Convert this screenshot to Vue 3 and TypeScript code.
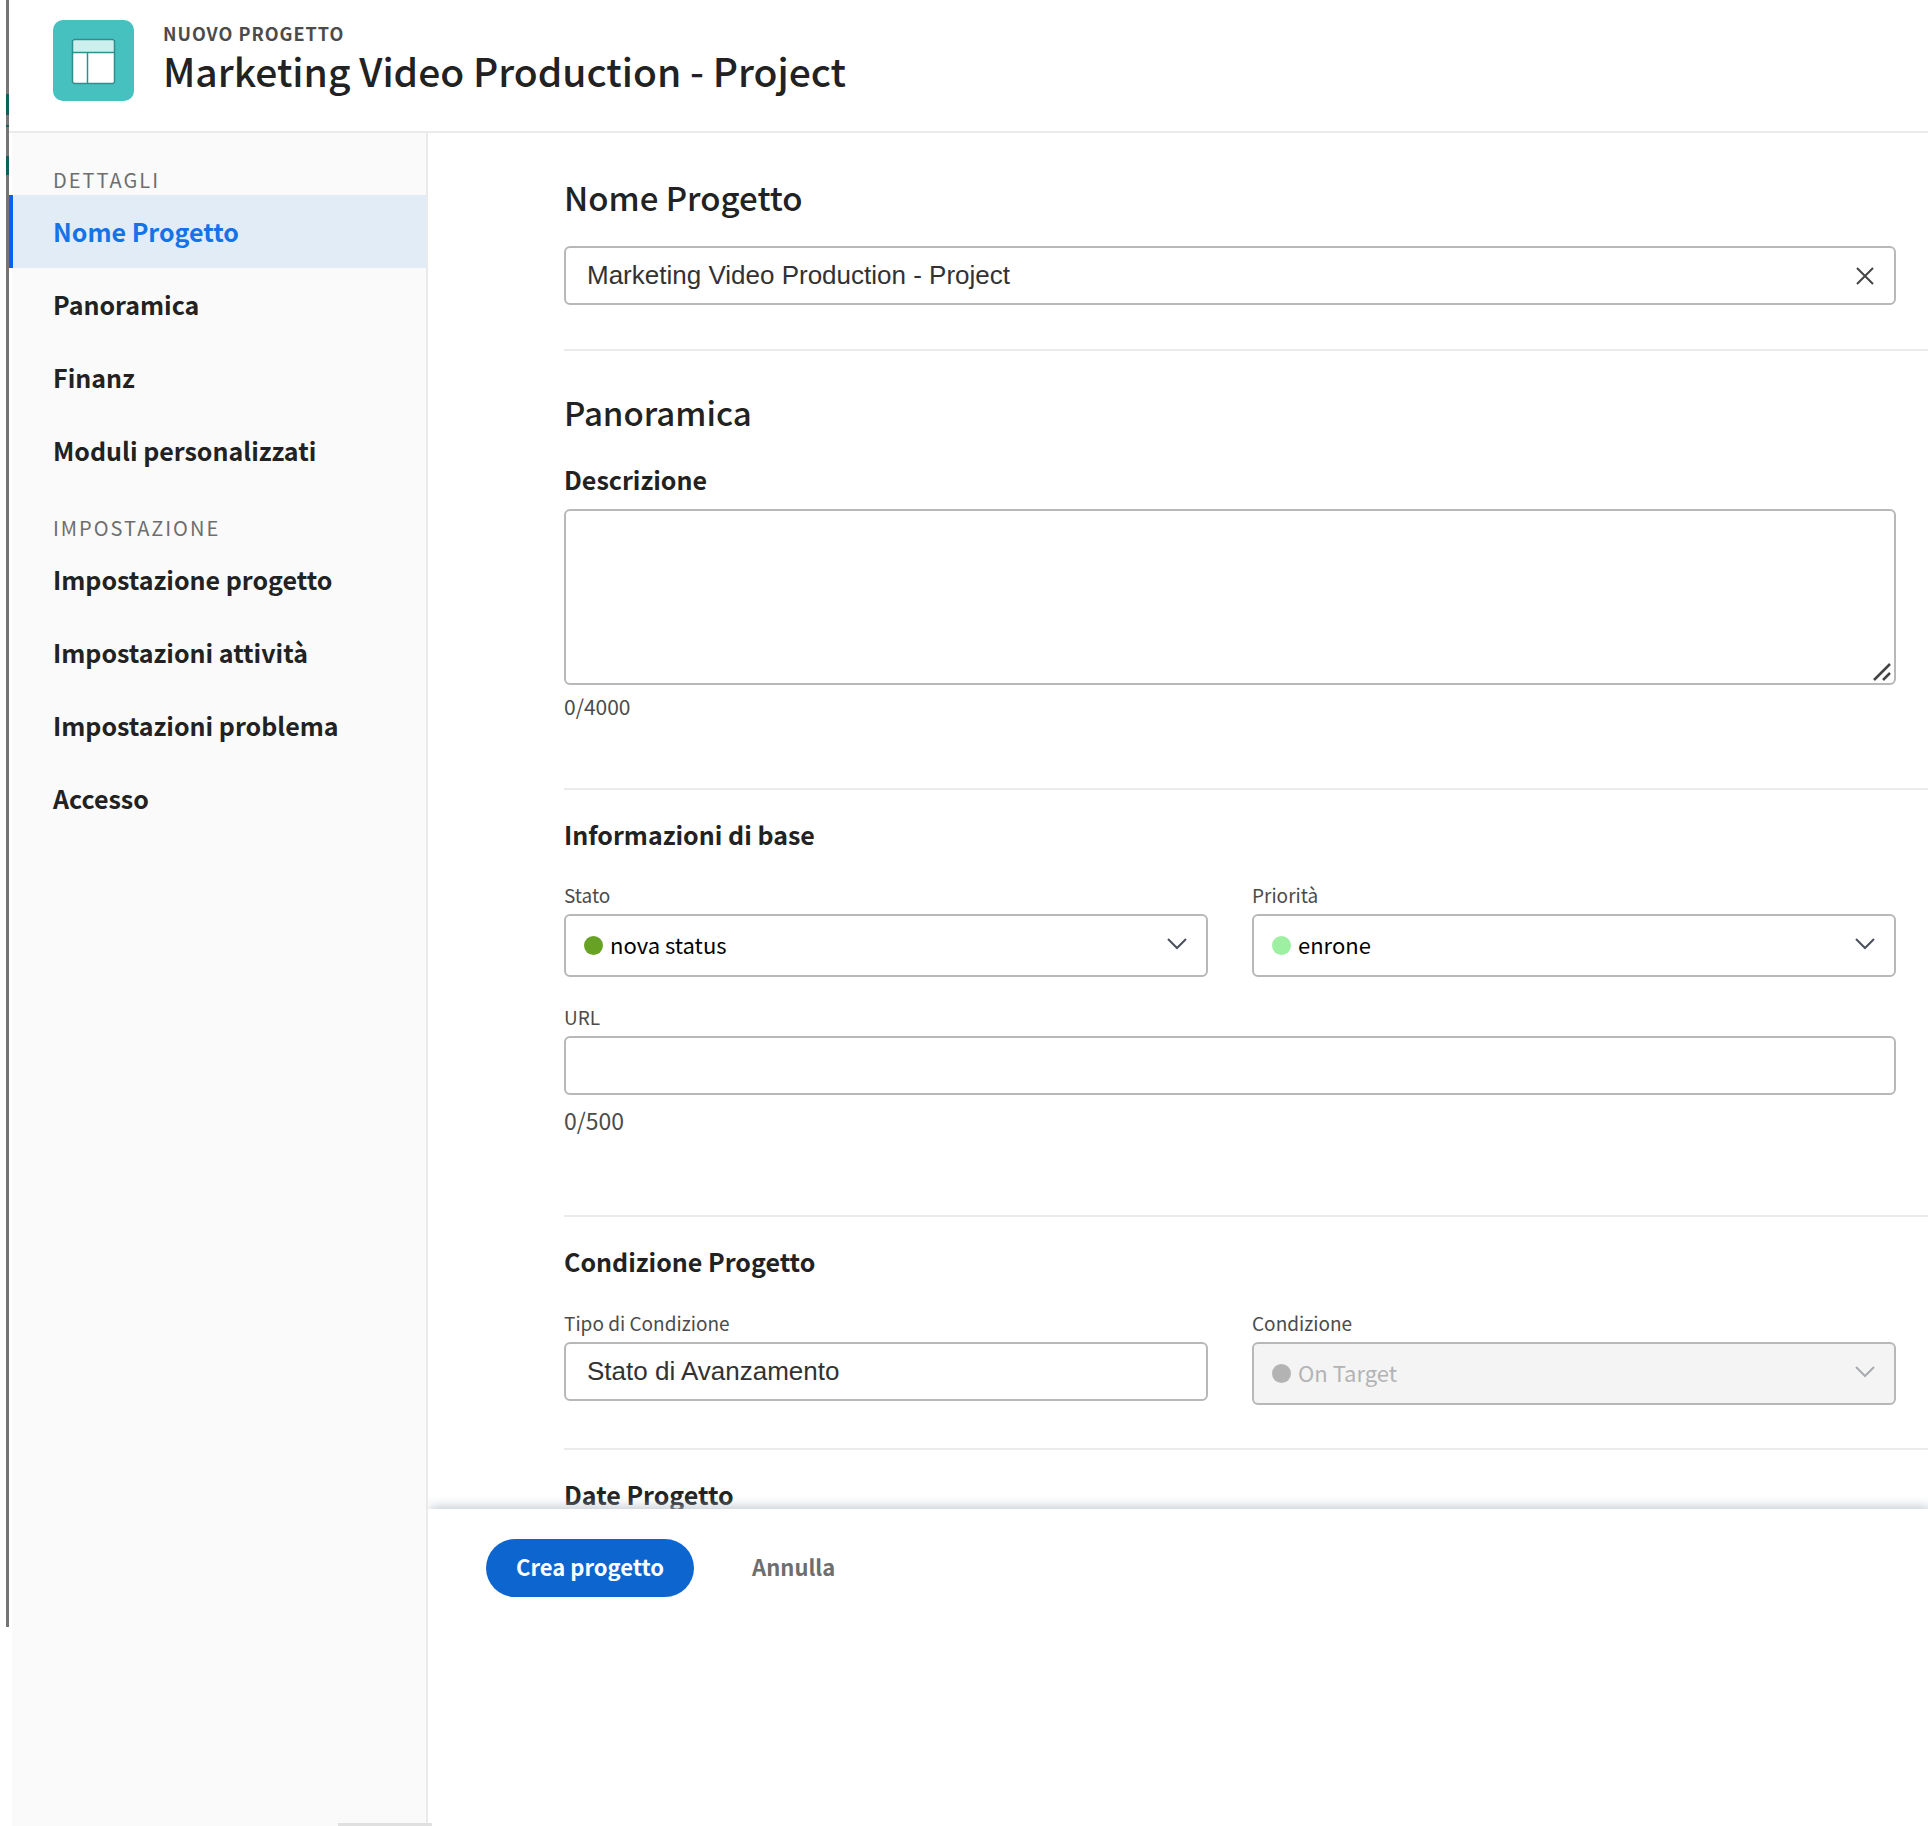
<script setup lang="ts">
import { ref } from 'vue'

interface NavItem {
  id: string
  label: string
}

interface NavGroup {
  title: string
  items: NavItem[]
}

const groups: NavGroup[] = [
  {
    title: 'DETTAGLI',
    items: [
      { id: 'nome', label: 'Nome Progetto' },
      { id: 'panoramica', label: 'Panoramica' },
      { id: 'finanz', label: 'Finanz' },
      { id: 'moduli', label: 'Moduli personalizzati' },
    ],
  },
  {
    title: 'IMPOSTAZIONE',
    items: [
      { id: 'progetto', label: 'Impostazione progetto' },
      { id: 'attivita', label: 'Impostazioni attività' },
      { id: 'problema', label: 'Impostazioni problema' },
      { id: 'accesso', label: 'Accesso' },
    ],
  },
]

const active = ref('nome')
const projectName = ref('Marketing Video Production - Project')
const description = ref('')
const url = ref('')
const conditionType = ref('Stato di Avanzamento')
</script>

<template>
  <div class="dialog">
    <div class="rail" aria-hidden="true"></div>
    <header class="header">
      <svg class="logo" viewBox="0 0 81 81" aria-hidden="true">
        <rect width="81" height="81" rx="10" fill="#47c1bf" />
        <rect x="19" y="19" width="43" height="45" rx="2" fill="#fff" />
        <path d="M19 32V21a2 2 0 0 1 2-2h39a2 2 0 0 1 2 2v11z" fill="#cdf0ee" />
        <path d="M19.500 32.500h42M34.500 32.500v31" fill="none" stroke="#2f8f8f" stroke-width="1.500" />
        <rect x="19.500" y="19.500" width="42" height="44" rx="2" fill="none" stroke="#2f8f8f" stroke-width="1.500" />
      </svg>
      <div class="titles">
        <p class="eyebrow">NUOVO PROGETTO</p>
        <h1 class="title">Marketing Video Production - Project</h1>
      </div>
    </header>

    <div class="body">
      <nav class="sidebar">
        <div v-for="group in groups" :key="group.title" class="group">
          <p class="group-title">{{ group.title }}</p>
          <a
            v-for="item in group.items"
            :key="item.id"
            class="nav-item"
            :class="{ active: active === item.id }"
            :href="'#' + item.id"
            @click="active = item.id"
          >{{ item.label }}</a>
        </div>
        <div class="sidebar-edge" aria-hidden="true"></div>
      </nav>

      <main class="main">
        <form id="project-form" class="form" @submit.prevent>
          <section class="section first">
            <h2><label for="name">Nome Progetto</label></h2>
            <div class="control">
              <input id="name" v-model="projectName" class="input name" type="text" />
              <button class="clear" type="button" aria-label="Cancella" @click="projectName = ''">
                <svg viewBox="0 0 18 18" width="18" height="18">
                  <path d="M1 1l16 16M17 1L1 17" stroke="#444" stroke-width="2" />
                </svg>
              </button>
            </div>
          </section>

          <section class="section overview">
            <h2>Panoramica</h2>
            <h3><label for="description">Descrizione</label></h3>
            <div class="control">
              <textarea id="description" v-model="description" class="input area" maxlength="4000"></textarea>
              <svg class="grip" viewBox="0 0 20 20" aria-hidden="true">
                <path d="M2 18L18 2M11 18l7-7" stroke="#444" stroke-width="2.500" />
              </svg>
            </div>
            <p class="count">{{ description.length }}/4000</p>
          </section>

          <section class="section info">
            <h3>Informazioni di base</h3>
            <div class="row">
              <div class="field">
                <label for="status">Stato</label>
                <div class="control">
                  <select id="status" class="input select"><option>nova status</option></select>
                  <span class="dot green"></span>
                  <svg class="chevron" viewBox="0 0 20 12" aria-hidden="true"><path d="M1 1l9 9 9-9" /></svg>
                </div>
              </div>
              <div class="field">
                <label for="priority">Priorità</label>
                <div class="control">
                  <select id="priority" class="input select"><option>enrone</option></select>
                  <span class="dot mint"></span>
                  <svg class="chevron" viewBox="0 0 20 12" aria-hidden="true"><path d="M1 1l9 9 9-9" /></svg>
                </div>
              </div>
            </div>
            <div class="field url">
              <label for="url">URL</label>
              <input id="url" v-model="url" class="input" type="text" maxlength="500" />
            </div>
            <p class="count large">{{ url.length }}/500</p>
          </section>

          <section class="section condition">
            <h3>Condizione Progetto</h3>
            <div class="row">
              <div class="field">
                <label for="condition-type">Tipo di Condizione</label>
                <input id="condition-type" v-model="conditionType" class="input" type="text" />
              </div>
              <div class="field">
                <label for="condition">Condizione</label>
                <div class="control">
                  <select id="condition" class="input select" disabled><option>On Target</option></select>
                  <span class="dot grey"></span>
                  <svg class="chevron muted" viewBox="0 0 20 12" aria-hidden="true"><path d="M1 1l9 9 9-9" /></svg>
                </div>
              </div>
            </div>
          </section>

          <section class="section dates">
            <h3>Date Progetto</h3>
          </section>
        </form>

        <footer class="footer">
          <button class="primary" type="submit" form="project-form">Crea progetto</button>
          <button class="cancel" type="button">Annulla</button>
        </footer>
      </main>
    </div>
  </div>
</template>

<style>
body {
  margin: 0;
}
</style>

<style scoped>
.dialog,
.dialog * {
  box-sizing: border-box;
}
.dialog {
  position: relative;
  display: flex;
  flex-direction: column;
  height: 100vh;
  padding-left: 9px;
  overflow: hidden;
  background: #fff;
  color: #222;
  font-family: 'Noto Sans CJK SC', 'Noto Sans', sans-serif;
}
p,
h1,
h2,
h3 {
  margin: 0;
}

/* Sliver of the page behind the dialog */
.rail {
  position: absolute;
  top: 0;
  left: 6px;
  width: 3px;
  height: calc(100vh - 199px);
  background: linear-gradient(
    #757575 94px, #0f5f5a 94px 115px, #757575 115px 125px, #0f5f5a 125px 127px,
    #757575 127px 156px, #0f5f5a 156px 175px, #757575 175px
  );
}

.header {
  display: flex;
  align-items: flex-start;
  gap: 29px;
  padding: 20px 44px 30px;
  border-bottom: 2px solid #ebebeb;
}
.logo {
  width: 81px;
  height: 81px;
  flex: none;
}
.eyebrow {
  color: #4b4b4b;
  font-size: 18px;
  font-weight: 700;
  line-height: 26px;
  letter-spacing: 1px;
}
.title {
  font-size: 39px;
  font-weight: 500;
  line-height: 48px;
}

.body {
  display: flex;
  flex: 1;
  min-height: 0;
}
.sidebar {
  position: relative;
  flex: none;
  width: 419px;
  padding-top: 34px;
  border-right: 2px solid #eaeaea;
  background: linear-gradient(90deg, #fff 3px, #fafafa 3px);
}
.sidebar-edge {
  position: absolute;
  z-index: 1;
  right: -6px;
  bottom: 0;
  width: 94px;
  height: 3px;
  background: #e0e0e0;
}
.group + .group {
  margin-top: 28px;
}
.group-title {
  margin-bottom: 3px;
  padding-top: 1px;
  padding-left: 44px;
  color: #6e6e6e;
  font-size: 20px;
  line-height: 24px;
  letter-spacing: 2px;
}
.nav-item {
  display: block;
  padding-left: 40px;
  border-left: 4px solid transparent;
  color: #222;
  font-size: 25px;
  font-weight: 700;
  line-height: 73px;
  text-decoration: none;
}
.nav-item.active {
  border-left-color: #0265f0;
  background: #e2ecf7;
  color: #1473e6;
}

.main {
  display: flex;
  flex: 1;
  flex-direction: column;
  min-width: 0;
}
.form {
  flex: 1;
  min-height: 0;
  padding-left: 136px;
  overflow-y: auto;
  scrollbar-width: none;
}
.section {
  padding-top: 28px;
  padding-right: 32px;
  padding-bottom: 44px;
  border-bottom: 2px solid #ebebeb;
}
.first {
  padding-top: 44px;
}
.overview {
  padding-top: 41px;
  padding-bottom: 70px;
}
.info {
  padding-bottom: 83px;
}
.dates {
  border-bottom: 0;
}
h2 {
  font-size: 33px;
  font-weight: 500;
  line-height: 40px;
}
h3 {
  font-size: 25px;
  font-weight: 700;
  line-height: 32px;
}
.first h2 {
  margin-bottom: 29px;
}
.overview h2 {
  margin-bottom: 31px;
}
.overview h3 {
  margin-bottom: 14px;
}
.control {
  position: relative;
}
.input {
  display: block;
  width: 100%;
  height: 59px;
  margin: 0;
  padding: 0 21px;
  border: 2px solid #b8b8b8;
  border-radius: 6px;
  outline: none;
  background: #fff;
  color: #323232;
  font-family: 'Liberation Sans', sans-serif;
  font-size: 26px;
}
.name {
  padding-right: 64px;
}
.clear {
  position: absolute;
  top: 2px;
  right: 10px;
  display: flex;
  align-items: center;
  justify-content: center;
  width: 42px;
  height: 55px;
  padding: 0;
  border: 0;
  background: none;
}
.area {
  height: 176px;
  padding: 16px 21px;
  resize: none;
}
.grip {
  position: absolute;
  right: 4px;
  bottom: 3px;
  width: 20px;
  height: 20px;
}
.count {
  margin-top: 9px;
  color: #4b4b4b;
  font-size: 21px;
  line-height: 24px;
}
.count.large {
  margin-top: 13px;
  font-size: 23px;
}
.row {
  display: grid;
  grid-template-columns: 1fr 1fr;
  gap: 44px;
  margin-top: 33px;
}
.field label {
  display: block;
  margin-bottom: 7px;
  color: #4b4b4b;
  font-size: 19px;
  line-height: 24px;
}
.url {
  margin-top: 28px;
}
.condition .row {
  margin-top: 34px;
}
.condition {
  padding-bottom: 43px;
}
.select {
  height: 63px;
  padding: 0 60px 4px 44px;
  appearance: none;
  color: #000;
  font-family: 'Noto Sans CJK SC', 'Noto Sans', sans-serif;
  font-size: 22px;
}
.select:disabled {
  background: #f4f4f4;
  color: #b3b3b3;
  opacity: 1;
}
.dot {
  position: absolute;
  top: 22px;
  left: 20px;
  width: 19px;
  height: 19px;
  border-radius: 50%;
}
.green {
  background: #67a225;
}
.mint {
  background: #9df0a2;
}
.grey {
  background: #b3b3b3;
}
.chevron {
  position: absolute;
  top: 24px;
  right: 21px;
  width: 20px;
  height: 12px;
  pointer-events: none;
  fill: none;
  stroke: #4b505c;
  stroke-width: 2;
}
.chevron.muted {
  stroke: #a9abb0;
}

.footer {
  position: relative;
  display: flex;
  flex: none;
  align-items: flex-start;
  gap: 58px;
  padding: 30px 58px 229px;
  background: #fff;
  box-shadow: 2px -1px 12px #b4bfc8;
  clip-path: inset(-14px 0 0 0);
}
.primary,
.cancel {
  height: 58px;
  padding: 0 0 5px;
  border: 0;
  background: none;
  color: #6e6e6e;
  font-family: inherit;
  font-size: 22px;
  font-weight: 700;
}
.primary {
  padding: 0 30px 5px;
  border-radius: 29px;
  background: #0d66d0;
  color: #fff;
}
</style>
